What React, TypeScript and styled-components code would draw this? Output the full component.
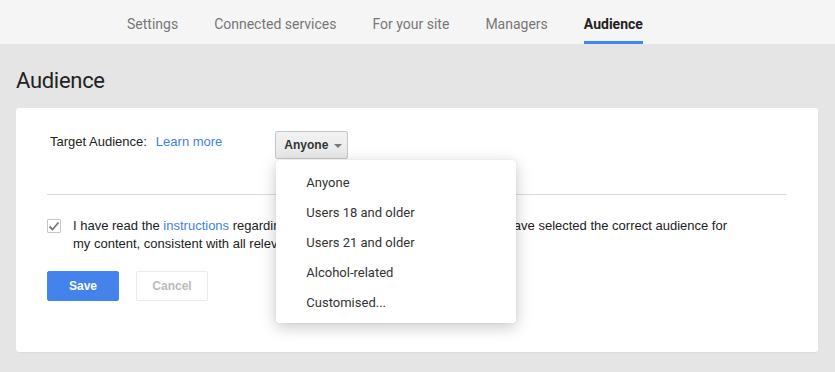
import React from "react";
import styled, { createGlobalStyle } from "styled-components";

const Global = createGlobalStyle`
  html, body { margin: 0; padding: 0; }
  body {
    background: #e5e5e5;
    font-family: "Liberation Sans", Arial, sans-serif;
    color: #222;
  }
  * { box-sizing: border-box; }
`;

const Page = styled.div`
  width: 835px;
  min-height: 372px;
  background: #e5e5e5;
`;

const TabBar = styled.nav`
  height: 44px;
  background: #f5f5f5;
  display: flex;
  align-items: stretch;
  padding-left: 127px;
  gap: 36px;
`;

const Tab = styled.div<{ $active?: boolean }>`
  display: flex;
  align-items: center;
  padding-top: 6px;
  font-family: Roboto, "Noto Sans", sans-serif;
  font-size: 14px;
  color: ${(p) => (p.$active ? "#222" : "#777")};
  font-weight: ${(p) => (p.$active ? 700 : 400)};
  border-bottom: 3px solid ${(p) => (p.$active ? "#4285f4" : "transparent")};
`;

const Main = styled.main`
  padding: 24px 17px 20px 16px;
`;

const Heading = styled.h1`
  margin: 0 0 14px;
  font-family: Roboto, "Noto Sans", sans-serif;
  font-weight: 400;
  font-size: 22px;
  line-height: 26px;
  letter-spacing: -0.3px;
  color: #222;
`;

const Card = styled.section`
  background: #fff;
  border-radius: 3px;
  padding: 23px 31px 51px 31px;
  box-shadow: 0 1px 1px rgba(0, 0, 0, 0.04);
`;

const AudienceRow = styled.div`
  display: flex;
  align-items: flex-start;
  padding-left: 3px;
`;

const Label = styled.span`
  font-size: 13px;
  line-height: 18px;
  margin-top: 2px;
  color: #222;
`;

const Link = styled.a`
  color: #427fed;
  text-decoration: none;
  cursor: pointer;
`;

const LearnMore = styled(Link)`
  font-size: 13px;
  line-height: 18px;
  margin: 2px 0 0 9px;
`;

const SelectWrap = styled.div`
  position: relative;
  margin-left: 53px;
`;

const SelectButton = styled.button`
  display: flex;
  align-items: center;
  gap: 6px;
  height: 28px;
  padding: 0 5px 0 8px;
  border: 1px solid #c6c6c6;
  border-radius: 2px;
  background: linear-gradient(#f1f1f1, #e8e8e8);
  font-family: "Liberation Sans", Arial, sans-serif;
  font-weight: 700;
  font-size: 12px;
  color: #333;
`;

const Caret = styled.span`
  width: 0;
  height: 0;
  border-left: 4px solid transparent;
  border-right: 4px solid transparent;
  border-top: 4px solid #777;
  margin-top: 1px;
`;

const Menu = styled.ul`
  position: absolute;
  top: 29px;
  left: 1px;
  width: 240px;
  margin: 0;
  padding: 7px 0 6px;
  list-style: none;
  background: #fff;
  border-radius: 3px;
  box-shadow: 0 4px 16px rgba(0, 0, 0, 0.22), 0 0 1px rgba(0, 0, 0, 0.2);
  z-index: 10;
`;

const MenuItem = styled.li`
  height: 30px;
  display: flex;
  align-items: center;
  padding-left: 30px;
  font-family: Roboto, "Noto Sans", sans-serif;
  font-size: 13px;
  color: #333;
`;

const Divider = styled.hr`
  border: 0;
  border-top: 1px solid #dcdcdc;
  margin: 35px 0 22px;
`;

const ConfirmRow = styled.label`
  display: flex;
  align-items: flex-start;
  gap: 12px;
`;

const Box = styled.span`
  flex: none;
  width: 14px;
  height: 14px;
  margin-top: 2px;
  border: 1px solid #c6c6c6;
  border-radius: 1px;
  display: flex;
  align-items: center;
  justify-content: center;
  background: #fff;
`;

const ConfirmText = styled.span`
  font-size: 13px;
  line-height: 18px;
  color: #222;
  max-width: 662px;
`;

const Actions = styled.div`
  display: flex;
  gap: 17px;
  margin-top: 18px;
`;

const Button = styled.button<{ $primary?: boolean }>`
  width: 72px;
  height: 30px;
  border-radius: 2px;
  font-family: "Liberation Sans", Arial, sans-serif;
  font-weight: 700;
  font-size: 12px;
  border: 1px solid ${(p) => (p.$primary ? "#4285f4" : "#ebebeb")};
  background: ${(p) => (p.$primary ? "#4483ec" : "#fff")};
  color: ${(p) => (p.$primary ? "#fff" : "#bbb")};
`;

const options = ["Anyone", "Users 18 and older", "Users 21 and older", "Alcohol-related", "Customised..."];

export default function App() {
  return (
    <Page>
      <Global />
      <TabBar>
        <Tab>Settings</Tab>
        <Tab>Connected services</Tab>
        <Tab>For your site</Tab>
        <Tab>Managers</Tab>
        <Tab $active>Audience</Tab>
      </TabBar>
      <Main>
        <Heading>Audience</Heading>
        <Card>
          <AudienceRow>
            <Label>Target Audience:</Label>
            <LearnMore>Learn more</LearnMore>
            <SelectWrap>
              <SelectButton>
                Anyone
                <Caret />
              </SelectButton>
              <Menu>
                {options.map((o) => (
                  <MenuItem key={o}>{o}</MenuItem>
                ))}
              </Menu>
            </SelectWrap>
          </AudienceRow>
          <Divider />
          <ConfirmRow>
            <Box>
              <svg width="12" height="11" viewBox="0 0 12 11">
                <path d="M1.5 5.5 L4.5 8.5 L10.5 1.5" fill="none" stroke="#777" strokeWidth="1.8" />
              </svg>
            </Box>
            <ConfirmText>
              I have read the <Link>instructions</Link> regarding audience selection and confirm that I have
              selected the correct audience for my content, consistent with all relevant laws and policies.
            </ConfirmText>
          </ConfirmRow>
          <Actions>
            <Button $primary>Save</Button>
            <Button>Cancel</Button>
          </Actions>
        </Card>
      </Main>
    </Page>
  );
}
